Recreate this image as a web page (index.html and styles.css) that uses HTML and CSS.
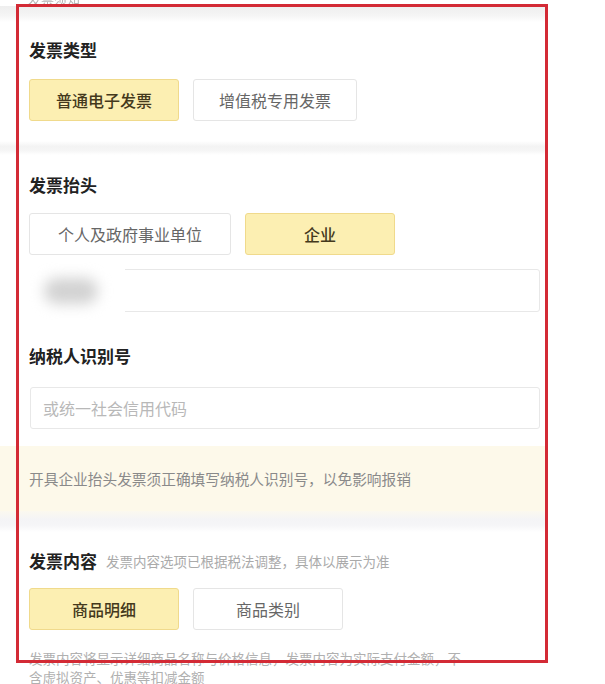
FILE: index.html
```html
<!DOCTYPE html>
<html lang="zh-CN">
<head>
<meta charset="utf-8">
<title>发票信息</title>
<link rel="stylesheet" href="styles.css">
</head>
<body>
<div class="page">
  <div class="top-note"><span>发票须知</span></div>
  <div class="band band-top"></div>

  <section class="section s1">
    <h2 class="title">发票类型</h2>
    <div class="options">
      <div class="opt opt-on w150">普通电子发票</div>
      <div class="opt w164">增值税专用发票</div>
    </div>
  </section>

  <div class="band band-mid"></div>

  <section class="section s2">
    <h2 class="title">发票抬头</h2>
    <div class="options">
      <div class="opt w202">个人及政府事业单位</div>
      <div class="opt opt-on w150">企业</div>
    </div>
    <div class="field field-name">
      <div class="mask"><div class="blob"></div></div>
    </div>
    <h2 class="title t-tax">纳税人识别号</h2>
    <div class="field field-tax"><span class="ph">或统一社会信用代码</span></div>
  </section>

  <div class="notice">开具企业抬头发票须正确填写纳税人识别号，以免影响报销</div>
  <div class="band band-notice"></div>

  <section class="section s3">
    <h2 class="title">发票内容<span class="sub">发票内容选项已根据税法调整，具体以展示为准</span></h2>
    <div class="options">
      <div class="opt opt-on w150">商品明细</div>
      <div class="opt w150">商品类别</div>
    </div>
    <p class="desc">发票内容将显示详细商品名称与价格信息，发票内容为实际支付金额，不含虚拟资产、优惠等扣减金额</p>
  </section>

  <div class="frame"></div>
</div>
</body>
</html>
```

FILE: styles.css
```css
* { box-sizing: border-box; }
html, body { margin: 0; padding: 0; background: #ffffff; }
body {
  font-family: "Noto Sans CJK SC", "Noto Sans", "Liberation Sans", sans-serif;
  color: #222;
  overflow: hidden;
  height: 684px;
}
.page {
  position: relative;
  width: 548px;
}
.top-note {
  height: 6px;
  overflow: hidden;
  display: flex;
  align-items: flex-end;
  padding-left: 28px;
}
.top-note span {
  font-size: 13px;
  line-height: 14px;
  color: #b5b5b5;
  flex: none;
  filter: blur(0.6px);
}
.band-top {
  height: 16px;
  background: linear-gradient(#eeeeee, #f5f5f5 60%, #ffffff);
}
.band-mid {
  height: 14px;
  background: linear-gradient(#ffffff, #f3f3f3 40%, #f6f6f6 70%, #ffffff);
}
.section {
  padding: 0 8px 0 29px;
}
.s1 { padding-top: 16px; padding-bottom: 20px; }
.s2 { padding-top: 18px; padding-bottom: 17px; }
.s3 { padding-top: 17px; }
.title {
  margin: 0;
  font-size: 17px;
  line-height: 24px;
  font-weight: 700;
  color: #222;
  display: flex;
  align-items: center;
}
.sub {
  font-size: 13.5px;
  font-weight: 400;
  color: #aaaaaa;
  margin-left: 9px;
}
.options {
  display: flex;
  gap: 14px;
  margin-top: 17px;
}
.s2 .options { margin-top: 16px; }
.s3 .options { margin-top: 15px; }
.opt {
  height: 42px;
  border: 1px solid #e5e5e5;
  border-radius: 3px;
  background: #fff;
  color: #666;
  font-size: 16px;
  display: flex;
  align-items: center;
  justify-content: center;
}
.opt-on {
  background: #fcefb2;
  border-color: #f0da8c;
  color: #44391c;
  font-weight: 500;
}
.w150 { width: 150px; }
.w164 { width: 164px; }
.w202 { width: 202px; }
.field {
  height: 43px;
  border: 1px solid #e8e8e8;
  border-radius: 3px;
  background: #fff;
  display: flex;
  align-items: center;
  padding-left: 12px;
  margin-left: 1px;
}
.field-name {
  margin-top: 14px;
  position: relative;
}
.mask {
  position: absolute;
  left: -11px;
  top: -6px;
  width: 105px;
  height: 56px;
  background: #fff;
}
.blob {
  position: absolute;
  left: 24px;
  top: 14px;
  width: 54px;
  height: 26px;
  border-radius: 13px;
  background: #d2d2d2;
  filter: blur(7px);
}
.t-tax { margin-top: 32px; }
.field-tax {
  margin-top: 19px;
  height: 42px;
}
.ph {
  font-size: 16px;
  color: #b8b8b8;
}
.notice {
  height: 65px;
  background: #fdf9ea;
  padding-left: 29px;
  display: flex;
  align-items: center;
  font-size: 14.7px;
  color: #8a8a8a;
}
.band-notice {
  height: 21px;
  background: linear-gradient(#fbf8ef, #f4f4f6 40%, #f6f6f8 70%, #ffffff);
}
.desc {
  margin: 19px 0 0;
  font-size: 13.5px;
  line-height: 19px;
  color: #b0b0b0;
  width: 440px;
}
.frame {
  position: absolute;
  left: 16px;
  top: 4px;
  width: 532px;
  height: 659px;
  border: 3px solid #d32a35;
  pointer-events: none;
}
```
